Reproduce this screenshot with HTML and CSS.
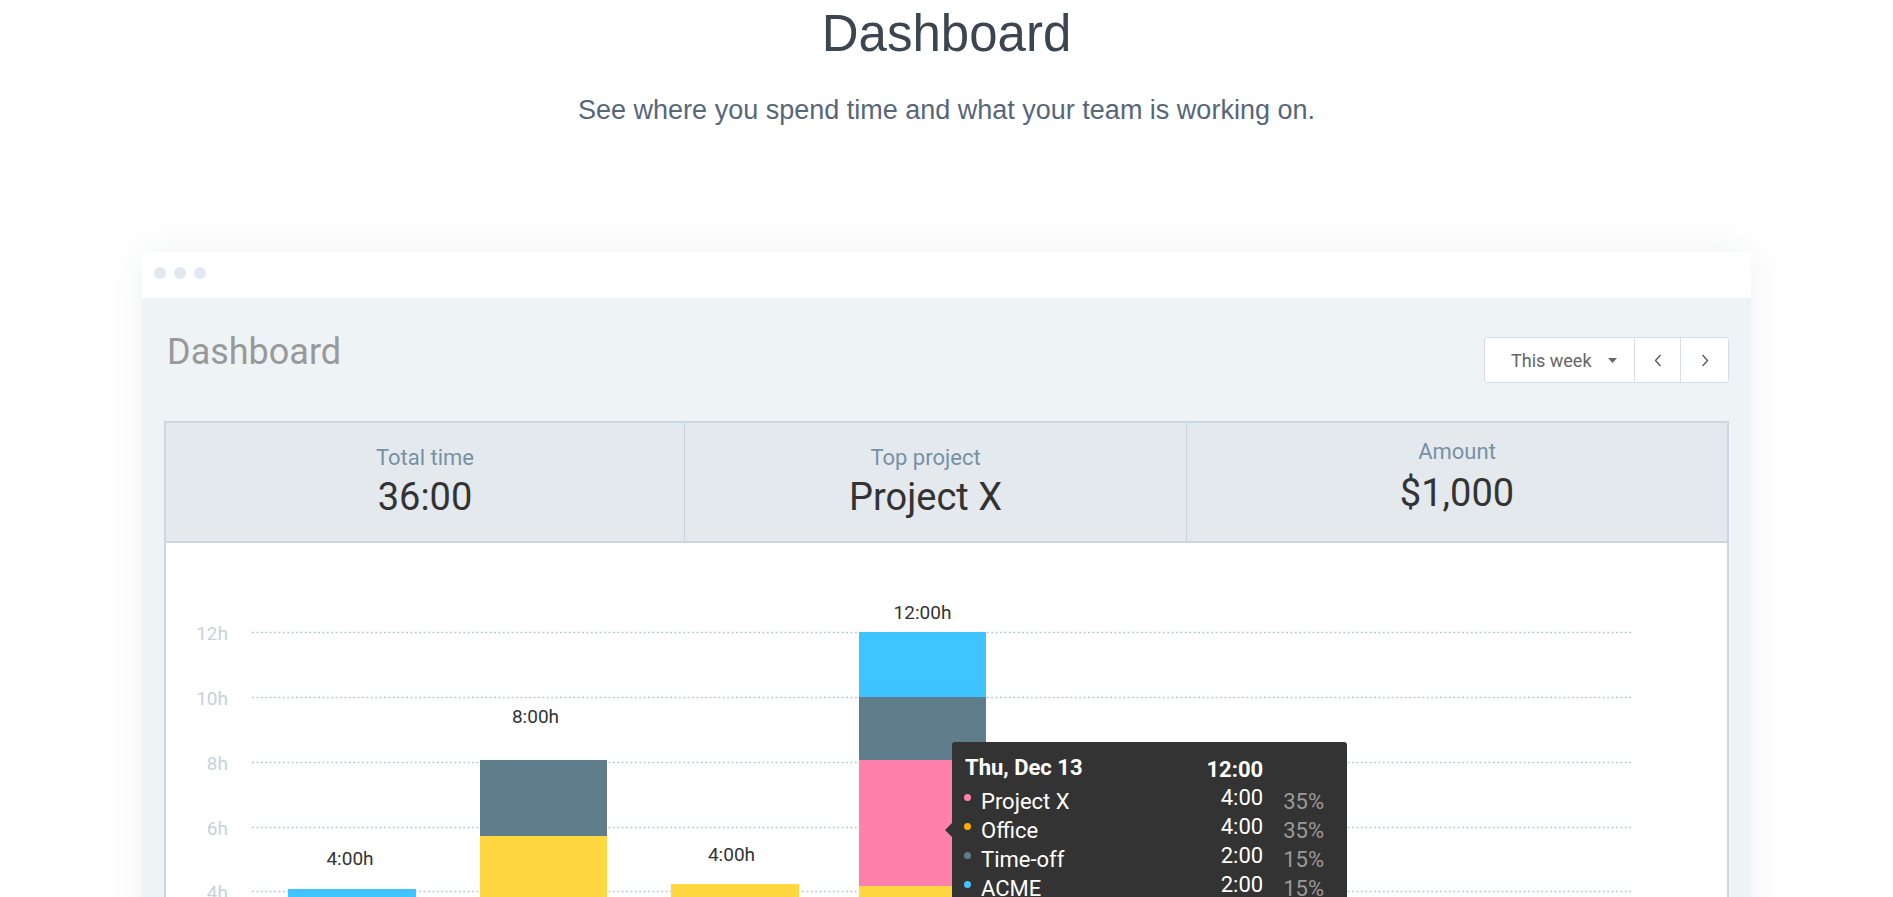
FILE: index.html
```html
<!DOCTYPE html>
<html lang="en">
<head>
<meta charset="utf-8">
<title>Dashboard</title>
<link rel="stylesheet" href="styles.css">
</head>
<body>
<header class="hero">
  <h1 class="hero-title">Dashboard</h1>
  <p class="hero-sub">See where you spend time and what your team is working on.</p>
</header>

<section class="window">
  <div class="window-bar">
    <span class="dot"></span><span class="dot"></span><span class="dot"></span>
  </div>
  <div class="window-body">
    <div class="toolbar">
      <h2 class="page-title">Dashboard</h2>
      <div class="btn-group">
        <button class="btn btn-range"><span class="range-text">This week</span>
          <svg class="caret" width="9" height="5" viewBox="0 0 9 5"><path d="M0 0h9L4.5 5z" fill="#666"/></svg>
        </button>
        <button class="btn btn-icon btn-prev" aria-label="Previous">
          <svg width="8" height="13" viewBox="0 0 8 13"><path d="M6.5 1L1.5 6.5L6.5 12" fill="none" stroke="#555" stroke-width="1.3"/></svg>
        </button>
        <button class="btn btn-icon btn-next" aria-label="Next">
          <svg width="8" height="13" viewBox="0 0 8 13"><path d="M1.5 1L6.5 6.5L1.5 12" fill="none" stroke="#555" stroke-width="1.3"/></svg>
        </button>
      </div>
    </div>

    <div class="panel">
      <div class="stats">
        <div class="stat">
          <div class="stat-label">Total time</div>
          <div class="stat-value">36:00</div>
        </div>
        <div class="stat stat-mid">
          <div class="stat-label">Top project</div>
          <div class="stat-value">Project X</div>
        </div>
        <div class="stat stat-raised">
          <div class="stat-label">Amount</div>
          <div class="stat-value">$1,000</div>
        </div>
      </div>

      <div class="chart">
        <svg class="chart-svg" width="1561" height="460" viewBox="0 0 1561 460">
          <g class="grid">
            <line x1="86" x2="1466" y1="89.5" y2="89.5"/>
            <line x1="86" x2="1466" y1="154.5" y2="154.5"/>
            <line x1="86" x2="1466" y1="219.5" y2="219.5"/>
            <line x1="86" x2="1466" y1="284.5" y2="284.5"/>
            <line x1="86" x2="1466" y1="348.5" y2="348.5"/>
          </g>
          <g class="axis">
            <text x="62" y="97">12h</text>
            <text x="62" y="162">10h</text>
            <text x="62" y="227">8h</text>
            <text x="62" y="292">6h</text>
            <text x="62" y="356">4h</text>
          </g>
          <g class="bars">
            <rect x="122" y="346" width="128" height="200" fill="#40c4ff"/>

            <rect x="314" y="217" width="127" height="76" fill="#607d8b"/>
            <rect x="314" y="293" width="127" height="200" fill="#ffd740"/>

            <rect x="505" y="341" width="128" height="200" fill="#ffd740"/>

            <rect x="693" y="89" width="127" height="65" fill="#40c4ff"/>
            <rect x="693" y="154" width="127" height="63" fill="#607d8b"/>
            <rect x="693" y="217" width="127" height="126" fill="#ff80ab"/>
            <rect x="693" y="343" width="127" height="200" fill="#ffd740"/>
          </g>
          <g class="totals">
            <text x="184" y="322">4:00h</text>
            <text x="369.5" y="180">8:00h</text>
            <text x="565.5" y="318">4:00h</text>
            <text x="756.5" y="76">12:00h</text>
          </g>
        </svg>

        <div class="tooltip">
          <div class="tt-date">Thu, Dec 13</div>
          <div class="tt-total">12:00</div>
          <div class="tt-spacer"></div>

          <span class="tt-dot dot-pink"></span>
          <span class="tt-name">Project X</span>
          <span class="tt-time">4:00</span>
          <span class="tt-pct">35%</span>

          <span class="tt-dot dot-orange"></span>
          <span class="tt-name">Office</span>
          <span class="tt-time">4:00</span>
          <span class="tt-pct">35%</span>

          <span class="tt-dot dot-slate"></span>
          <span class="tt-name">Time-off</span>
          <span class="tt-time">2:00</span>
          <span class="tt-pct">15%</span>

          <span class="tt-dot dot-blue"></span>
          <span class="tt-name">ACME</span>
          <span class="tt-time">2:00</span>
          <span class="tt-pct">15%</span>
        </div>
      </div>
    </div>
  </div>
</section>
</body>
</html>
```

FILE: styles.css
```css
* { box-sizing: border-box; }

html {
  overflow: hidden;
}

html, body {
  margin: 0;
  padding: 0;
  background: #ffffff;
}

body {
  font-family: "Roboto", "Liberation Sans", Arial, sans-serif;
  color: #333333;
}

/* ---------- hero ---------- */
.hero {
  text-align: center;
  font-family: "Liberation Sans", Arial, sans-serif;
  padding-top: 4px;
}

.hero-title {
  margin: 0;
  font-size: 51px;
  line-height: 60px;
  font-weight: 400;
  color: #3b4651;
}

.hero-sub {
  margin: 30px 0 0;
  font-size: 27px;
  line-height: 32px;
  color: #56677a;
}

/* ---------- window ---------- */
.window {
  width: 1609px;
  margin: 126px auto 0;
  border-radius: 5px;
  background: #eef3f6;
  box-shadow: 0 0 40px rgba(40, 50, 70, 0.07);
}

.window-bar {
  height: 46px;
  background: #ffffff;
  border-radius: 5px 5px 0 0;
  display: flex;
  gap: 8px;
  padding: 15px 12px 0;
}

.dot {
  width: 12px;
  height: 12px;
  border-radius: 50%;
  background: #e2e8ee;
}

.window-body {
  padding: 36px 22px 0;
}

/* ---------- toolbar ---------- */
.toolbar {
  display: flex;
  justify-content: space-between;
  align-items: flex-start;
}

.page-title {
  margin: 0;
  padding-left: 3px;
  font-size: 36px;
  line-height: 36px;
  font-weight: 400;
  color: #999999;
}

.btn-group {
  display: flex;
  margin-top: 3px;
  height: 46px;
  border: 1px solid #d6dee5;
  border-radius: 3px;
  background: #ffffff;
}

.btn {
  border: 0;
  margin: 0;
  background: transparent;
  font-family: inherit;
  display: flex;
  align-items: center;
  justify-content: center;
  height: 100%;
  padding: 0;
}

.btn + .btn {
  border-left: 1px solid #d6dee5;
}

.btn-range {
  width: 149px;
  justify-content: flex-start;
  padding: 0 0 0 26px;
  font-size: 18px;
  color: #666666;
  gap: 16px;
  white-space: nowrap;
}

.range-text {
  flex-shrink: 0;
}

.caret {
  display: block;
  flex-shrink: 0;
}

.btn-prev { width: 46px; }
.btn-next { width: 48px; }

/* ---------- panel ---------- */
.panel {
  margin-top: 38px;
  border: 2px solid #cbd7e0;
  border-bottom: 0;
}

.stats {
  display: grid;
  grid-template-columns: 518fr 502fr 541fr;
  background: #e4e9ed;
  border-bottom: 2px solid #cbd7e0;
}

.stat {
  text-align: center;
  padding: 22px 0;
}

.stat + .stat {
  border-left: 1px solid #c9d5de;
}

.stat-mid {
  padding-right: 20px;
}

.stat-label {
  font-size: 22px;
  line-height: 26px;
  color: #7791a5;
}

.stat-value {
  margin-top: 4px;
  font-size: 38px;
  line-height: 44px;
  color: #333333;
}

.stat-raised .stat-label {
  margin-top: -6px;
  margin-bottom: 6px;
}

/* ---------- chart ---------- */
.chart {
  position: relative;
  height: 460px;
  background: #ffffff;
}

.chart-svg {
  display: block;
}

.grid line {
  stroke: #bccad6;
  stroke-width: 1.4;
  stroke-dasharray: 2 2.4;
}

.axis text {
  font-family: "Roboto", sans-serif;
  font-size: 19px;
  fill: #c6d2db;
  text-anchor: end;
}

.totals text {
  font-family: "Roboto", sans-serif;
  font-size: 19px;
  fill: #333333;
  text-anchor: middle;
}

/* ---------- tooltip ---------- */
.tooltip {
  position: absolute;
  left: 786px;
  top: 199px;
  width: 395px;
  background: #333333;
  border-radius: 3px;
  padding: 11px 23px 12px 12px;
  color: #ffffff;
  font-size: 22px;
  line-height: 29px;
  display: grid;
  grid-template-columns: 7px 1fr auto auto;
  column-gap: 10px;
  align-items: start;
}

.tooltip::before {
  content: "";
  position: absolute;
  left: -7px;
  top: 81px;
  border-top: 7px solid transparent;
  border-bottom: 7px solid transparent;
  border-right: 7px solid #333333;
}

.tt-date {
  grid-column: 1 / 3;
  font-weight: 700;
  padding-left: 1px;
  margin-bottom: 5px;
}

.tt-total {
  font-weight: 700;
  text-align: right;
  margin-top: 2px;
}

.tt-dot {
  width: 7px;
  height: 7px;
  border-radius: 50%;
  margin-top: 7px;
}

.dot-pink { background: #ff80ab; }
.dot-orange { background: #ffab00; }
.dot-slate { background: #607d8b; }
.dot-blue { background: #40c4ff; }

.tt-time {
  text-align: right;
  line-height: 21px;
}

.tt-pct {
  margin-left: 10px;
  color: #9a9a9a;
}
```
